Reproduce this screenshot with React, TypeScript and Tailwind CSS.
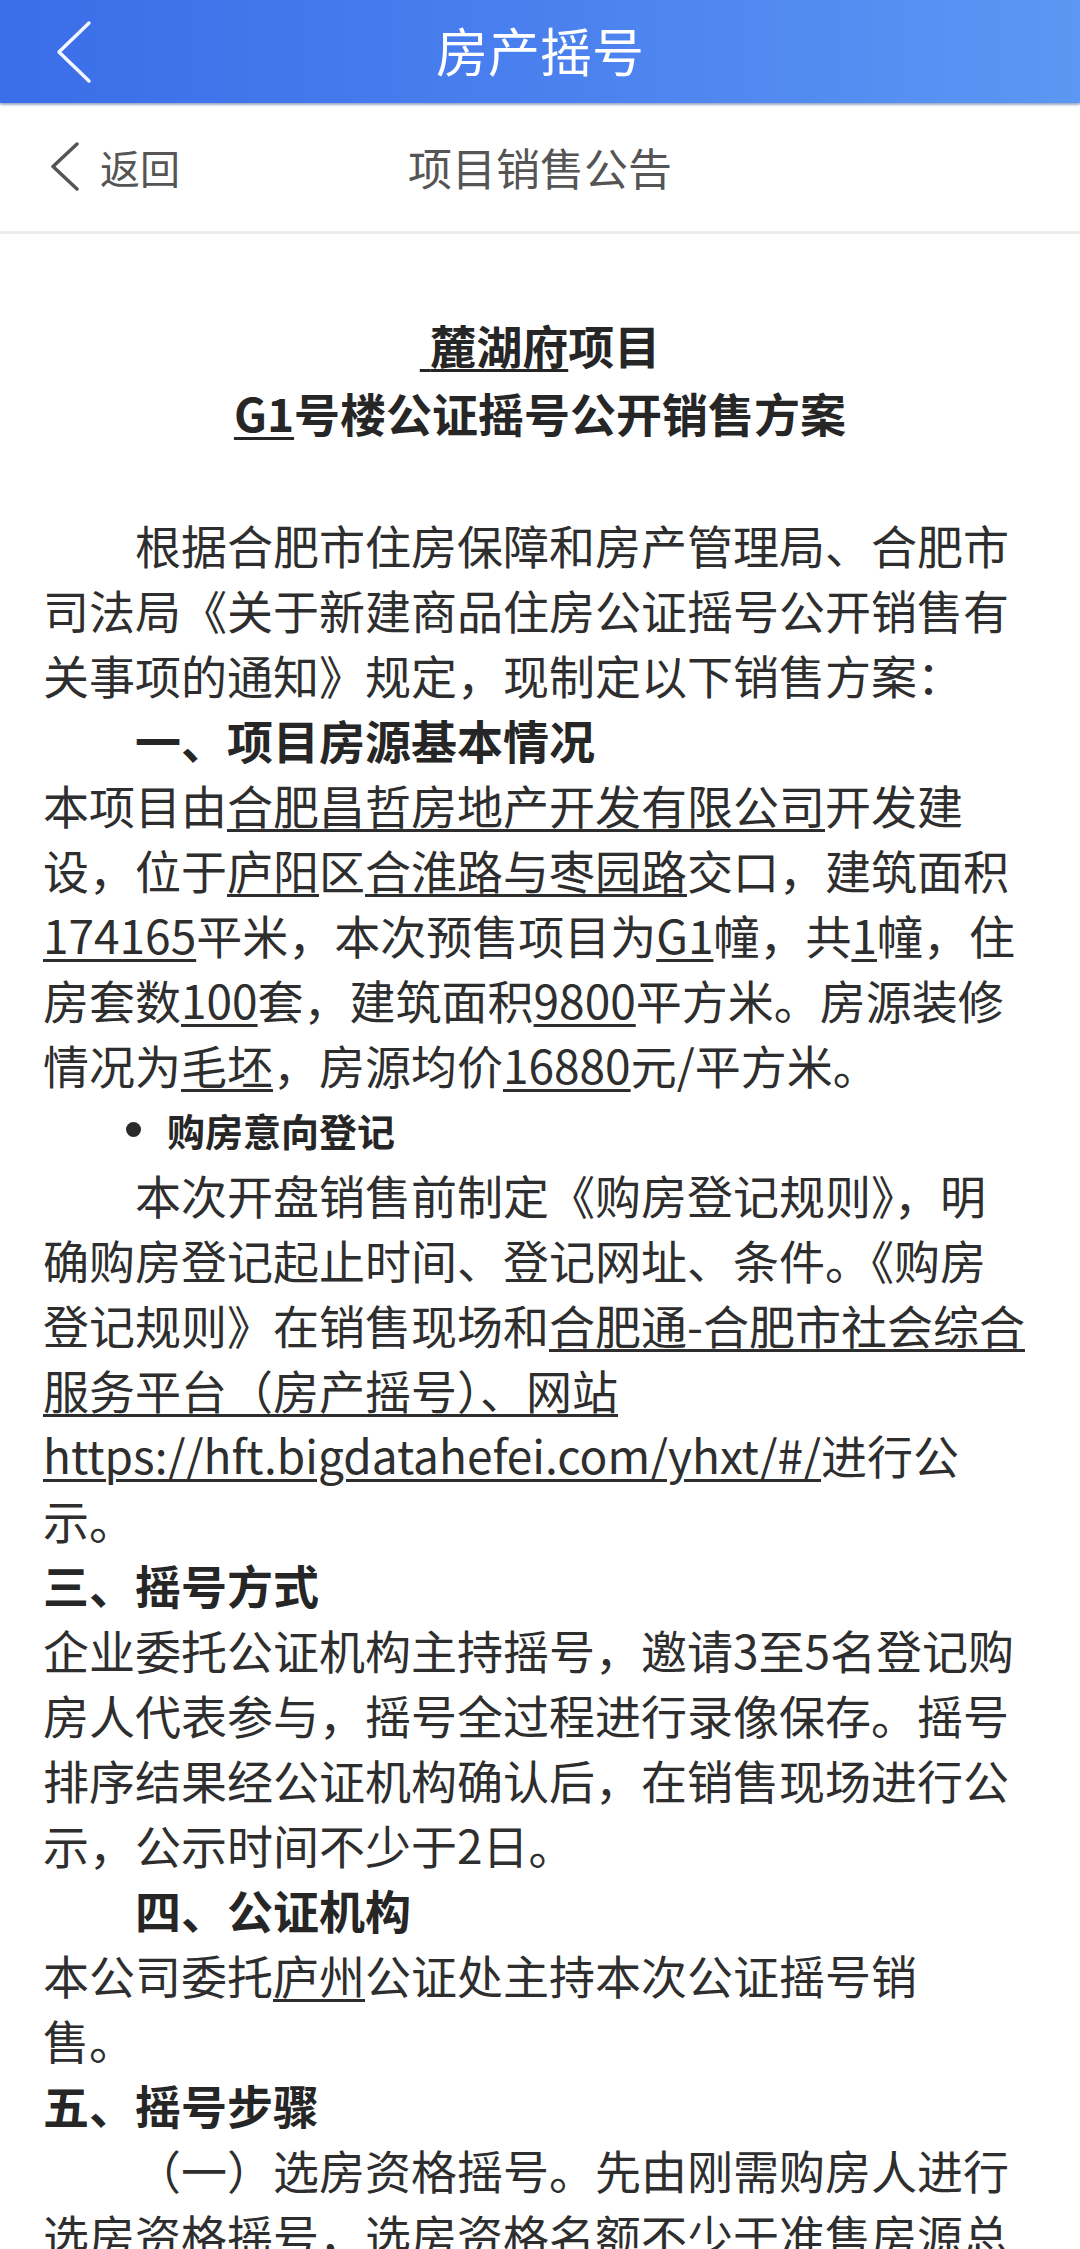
import type { ReactNode } from 'react';

const U = ({ children }: { children: ReactNode }) => (
  <span className="underline decoration-[3px] underline-offset-[5px]">{children}</span>
);

export default function App() {
  return (
    <div className="min-h-screen bg-white font-['Noto_Sans_CJK_SC','Noto_Sans',sans-serif] text-[#2e2e2e]">
      {/* App bar */}
      <div className="grid h-[103px] grid-cols-[1fr_auto_1fr] items-center bg-gradient-to-r from-[#3a6de8] via-[#4a80ee] to-[#5c97f3] shadow-[0_2px_2px_rgba(40,70,130,0.45)]">
        <div className="pl-[56px]">
          <svg width="36" height="64" viewBox="0 0 36 64" fill="none">
            <path d="M33 3 L3 32 L33 61" stroke="#f2f7ff" strokeWidth="3.5" strokeLinecap="round" strokeLinejoin="round" />
          </svg>
        </div>
        <div className="pb-[4px] text-[52px] leading-none text-white">房产摇号</div>
        <div />
      </div>

      {/* Sub header */}
      <div className="grid h-[131px] grid-cols-[1fr_auto_1fr] items-center border-b-[3px] border-[#ececec]">
        <div className="flex items-center gap-[20px] pl-[50px] text-[40px] text-[#555]">
          <svg width="30" height="50" viewBox="0 0 30 50" fill="none">
            <path d="M27 2 L3 24.5 L27 47" stroke="#555" strokeWidth="3.5" strokeLinecap="round" strokeLinejoin="round" />
          </svg>
          <span className="leading-none">返回</span>
        </div>
        <div className="text-[44px] leading-none text-[#555]">项目销售公告</div>
        <div />
      </div>

      {/* Article */}
      <div className="px-[43px] pt-[76px] text-[46px] leading-[65px]">
        <div className="mb-[66px] text-center font-bold leading-[68px] text-[#262626]">
          <div>
            <U>{'\u00a0'}麓湖府</U>项目
          </div>
          <div>
            <U>G1</U>号楼公证摇号公开销售方案
          </div>
        </div>

        <p className="indent-[2em]">
          根据合肥市住房保障和房产管理局、合肥市
          <br />
          司法局《关于新建商品住房公证摇号公开销售有
          <br />
          关事项的通知》规定，现制定以下销售方案：
        </p>

        <p className="indent-[2em] font-bold text-[#262626]">一、项目房源基本情况</p>

        <p>
          本项目由<U>合肥昌哲房地产开发有限公司</U>开发建
          <br />
          设，位于<U>庐阳</U>区<U>合淮路与枣园路</U>交口，建筑面积
          <br />
          <U>174165</U>平米，本次预售项目为<U>G1</U>幢，共<U>1</U>幢，住
          <br />
          房套数<U>100</U>套，建筑面积<U>9800</U>平方米。房源装修
          <br />
          情况为<U>毛坯</U>，房源均价<U>16880</U>元/平方米。
        </p>

        <div className="flex items-center gap-[26px] pl-[83px] text-[38px] font-bold text-[#262626]">
          <span className="h-[15px] w-[15px] rounded-full bg-[#2a2a2a]" />
          <span>购房意向登记</span>
        </div>

        <p>
          <span className="pl-[2em]">本次开盘销售前制定《购房登记规则》，明</span>
          <br />
          确购房登记起止时间、登记网址、条件。《购房
          <br />
          登记规则》在销售现场和<U>合肥通-合肥市社会综合</U>
          <br />
          <U>服务平台（房产摇号）、网站</U>
          <br />
          <U>https://hft.bigdatahefei.com/yhxt/#/</U>进行公
          <br />
          示。
        </p>

        <p className="font-bold text-[#262626]">三、摇号方式</p>

        <p>
          企业委托公证机构主持摇号，邀请3至5名登记购
          <br />
          房人代表参与，摇号全过程进行录像保存。摇号
          <br />
          排序结果经公证机构确认后，在销售现场进行公
          <br />
          示，公示时间不少于2日。
        </p>

        <p className="indent-[2em] font-bold text-[#262626]">四、公证机构</p>

        <p>
          本公司委托<U>庐州</U>公证处主持本次公证摇号销
          <br />
          售。
        </p>

        <p className="font-bold text-[#262626]">五、摇号步骤</p>

        <p>
          <span className="pl-[2em]">（一）选房资格摇号。先由刚需购房人进行</span>
          <br />
          选房资格摇号，选房资格名额不少于准售房源总
        </p>
      </div>
    </div>
  );
}
